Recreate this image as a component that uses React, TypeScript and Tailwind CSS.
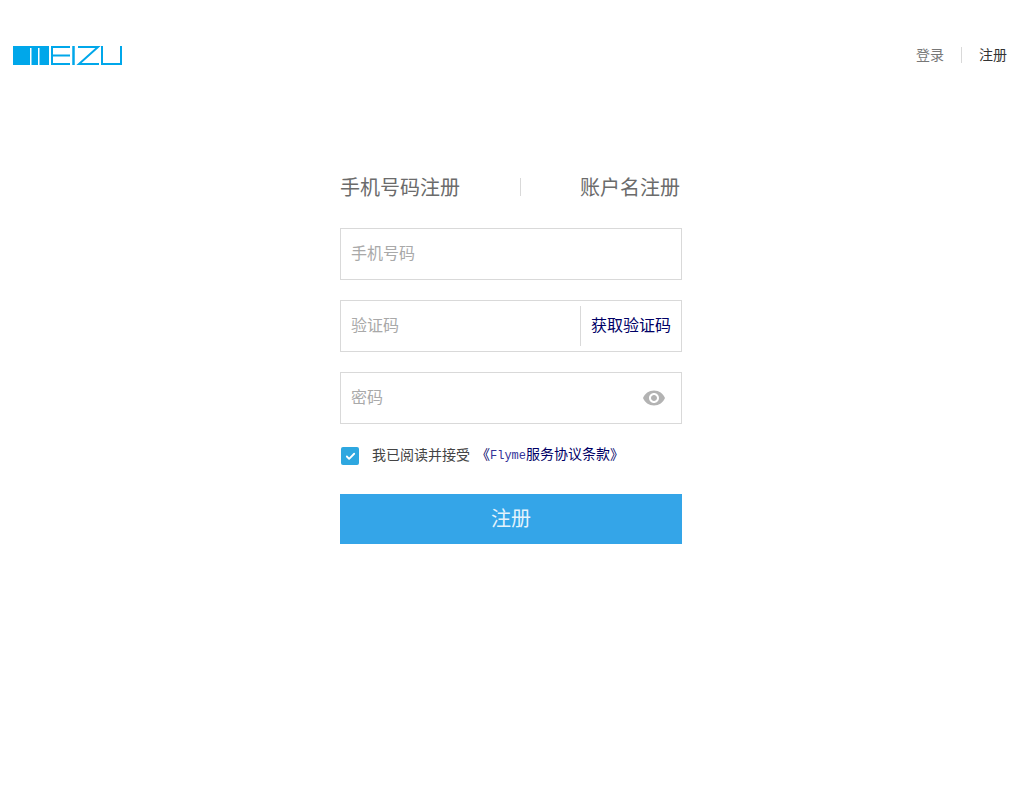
import { Check } from "lucide-react";

const font = "font-['SimSun','Noto_Sans_CJK_SC',sans-serif]";

function Logo() {
  return (
    <svg width="110" height="20" viewBox="0 0 110 20" fill="none">
      {/* M */}
      <path d="M0 1H36V20H0Z" fill="#00a7ea" />
      <path d="M17 3H18.5V20H17ZM25 3H26.5V20H25Z" fill="#fff" />
      {/* E */}
      <path d="M38 2H57M38 10.5H57M38 19H57M39 2V19" stroke="#00a7ea" strokeWidth="2" />
      {/* I */}
      <path d="M60.5 1V20" stroke="#00a7ea" strokeWidth="2.5" />
      {/* Z */}
      <path d="M65 2H85L66 19H86" stroke="#00a7ea" strokeWidth="2" />
      {/* U */}
      <path d="M89 1V19H108V1" stroke="#00a7ea" strokeWidth="2" />
    </svg>
  );
}

function EyeIcon() {
  return (
    <svg width="24" height="24" viewBox="0 0 24 24" fill="#b3b3b3">
      <path d="M12 4.5C7 4.5 2.73 7.61 1 12c1.73 4.39 6 7.5 11 7.5s9.27-3.11 11-7.5c-1.73-4.39-6-7.5-11-7.5zM12 17c-2.76 0-5-2.24-5-5s2.24-5 5-5 5 2.24 5 5-2.24 5-5 5zm0-8c-1.66 0-3 1.34-3 3s1.34 3 3 3 3-1.34 3-3-1.34-3-3-3z" />
    </svg>
  );
}

function Field({ placeholder, right }: { placeholder: string; right?: React.ReactNode }) {
  return (
    <div className="flex h-[52px] w-[342px] items-center justify-between border border-[#d9d9d9] pl-[10px]">
      <span className="pb-1 text-base text-[#a9a9a9]">{placeholder}</span>
      {right}
    </div>
  );
}

export default function App() {
  return (
    <div className={`min-h-[800px] bg-white ${font}`}>
      <header className="flex items-start justify-between pl-[13px] pr-[17px] pt-[45px]">
        <Logo />
        <div className="mt-[2px] flex h-4 items-center text-sm">
          <span className="mb-[3px] text-[#777]">登录</span>
          <span className="mx-[17px] h-[16px] w-px bg-[#d9d9d9]" />
          <span className="mb-[3px] text-[#333]">注册</span>
        </div>
      </header>

      <main className="ml-[340px] mt-[111px] w-[342px]">
        <div className="flex h-[22px] w-[340px] items-center justify-between text-xl text-[#6b6b6b]">
          <span>手机号码注册</span>
          <span className="h-[18px] w-px bg-[#d9d9d9]" />
          <span>账户名注册</span>
        </div>

        <div className="mt-[30px] flex flex-col gap-5">
          <Field placeholder="手机号码" />
          <Field
            placeholder="验证码"
            right={
              <div className="flex h-10 items-center border-l border-[#d9d9d9] pb-1 pl-[10px] pr-[10px] text-base text-[#000066]">
                获取验证码
              </div>
            }
          />
          <Field placeholder="密码" right={<div className="mr-[15px] flex"><EyeIcon /></div>} />
        </div>

        <div className="ml-px mt-[23px] flex h-[18px] items-center text-sm">
          <span className="flex h-[18px] w-[18px] items-center justify-center rounded-[2px] bg-[#2ea7e0]">
            <Check size={11} strokeWidth={4} color="#fff" />
          </span>
          <span className="mb-1 ml-[13px] text-[#444]">我已阅读并接受</span>
          <span className="mb-1 ml-[6px] text-[#000066]">
            《<span className="font-['Liberation_Mono',monospace] text-[12px] text-[#333399]">Flyme</span>服务协议条款》
          </span>
        </div>

        <button className="mt-[29px] block h-[50px] w-[342px] bg-[#34a5e8] pb-0.5 text-xl text-[#e4f3fc]">注册</button>
      </main>
    </div>
  );
}
